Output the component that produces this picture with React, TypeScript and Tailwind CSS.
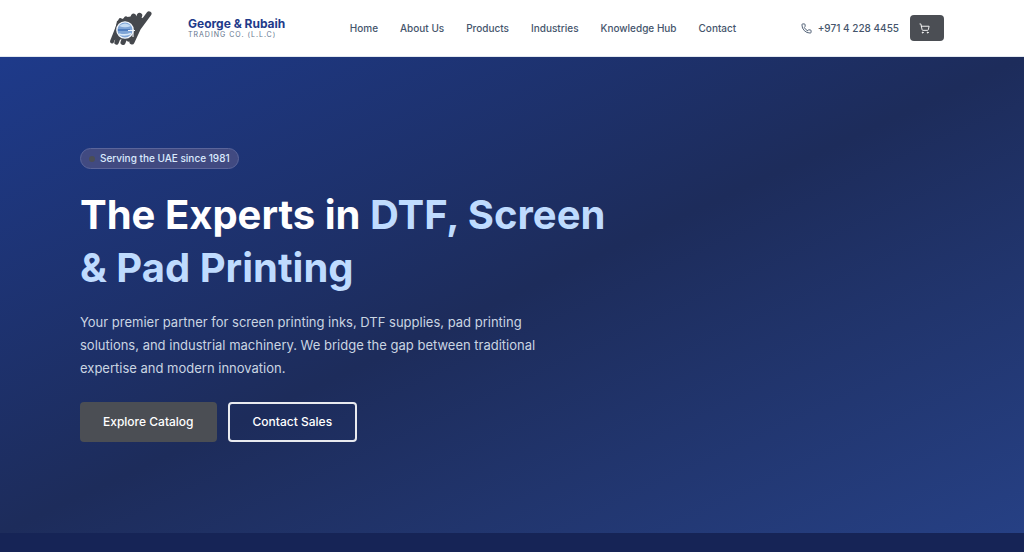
import { Phone, ShoppingCart } from 'lucide-react';

const navLinks = [
  { label: 'Home', href: '#home' },
  { label: 'About Us', href: '#about' },
  { label: 'Products', href: '#products' },
  { label: 'Industries', href: '#industries' },
  { label: 'Knowledge Hub', href: '#knowledge' },
  { label: 'Contact', href: '#contact' },
];

function Logo() {
  return (
    <svg viewBox="0 0 52 45" className="w-[52px] h-[45px]" aria-hidden="true">
      {/* brush strokes */}
      <g stroke="#45484d" fill="none" strokeLinecap="round">
        <path d="M7 35.500 L15.500 14" strokeWidth="4" />
        <path d="M11.500 36.500 L21 12.500" strokeWidth="4.500" />
        <path d="M18 36.500 L28.500 10" strokeWidth="5" />
        <path d="M24 33 L34.500 9.500" strokeWidth="5.500" />
        <path d="M27 36 L33.500 22 L44 7.800" strokeWidth="5" strokeLinejoin="round" />
      </g>
      <path d="M12 15 L22 11 L30 10 L38 12 L36 20 L31 29 L28 34 L22 33 L8 34 Z" fill="#45484d" />
      {/* globe */}
      <circle cx="20" cy="24" r="8.200" fill="#7fa5d6" stroke="#f3f7fc" strokeWidth="1.300" />
      <path d="M14 20 Q20 15 26 20 Q20 22.500 14 20 Z" fill="#c5dcf3" />
      <path d="M13 24 H25" stroke="#3d6eb5" strokeWidth="1.400" />
      <path d="M14 28 Q20 30 26 27.500" stroke="#d8e8f8" strokeWidth="1.600" fill="none" />
      <path d="M23 24.500 H30 M28 23.500 V31" stroke="#eef4fb" strokeWidth="1.200" fill="none" />
    </svg>
  );
}

function Header() {
  return (
    <header className="bg-white border-b border-slate-200">
      <div className="max-w-[910px] mx-auto px-[23px] h-14 flex items-center justify-between">
        <a href="#home" className="flex items-center">
          <span className="w-[108px] pl-[25px]">
            <Logo />
          </span>
          <span className="flex flex-col">
            <span className="text-[12px] leading-[14px] font-bold text-[#1e3a8a]">George &amp; Rubaih</span>
            <span className="text-[7px] leading-2 tracking-[1px] text-slate-500">TRADING CO. (L.L.C)</span>
          </span>
        </a>

        <nav className="flex items-center gap-[22px]">
          {navLinks.map((link) => (
            <a key={link.label} href={link.href} className="text-[10px] font-medium text-slate-600">
              {link.label}
            </a>
          ))}
        </nav>

        <div className="flex items-center gap-[11px]">
          <a href="tel:+97142284455" className="flex items-center gap-[6px] text-[10px] font-medium text-slate-600">
            <Phone size={11} />
            <span>+971 4 228 4455</span>
          </a>
          <button
            type="button"
            aria-label="Cart"
            className="h-[26px] w-[34px] pl-[9px] flex items-center rounded bg-[#4b4e54] text-white"
          >
            <ShoppingCart size={11} />
          </button>
        </div>
      </div>
    </header>
  );
}

function Hero() {
  return (
    <section className="bg-linear-to-br/srgb from-[#1e3a8a] via-[#1d2c5b] to-[#264084] py-[91px]">
      <div className="max-w-[910px] mx-auto px-[23px]">
        <div className="max-w-[546px]">
          <div className="flex w-fit items-center h-[21px] px-2 rounded-full bg-[#414a81] border border-[#5b659a] text-[10px] font-medium text-blue-100">
            <span className="size-[6px] mr-[5px] rounded-full bg-[#4b4e54]" />
            Serving the UAE since 1981
          </div>
          <h1 className="mt-[19px] text-[40px] leading-[53px] font-bold text-white">
            The Experts in <span className="text-[#bfdbfe]">DTF, Screen &amp; Pad Printing</span>
          </h1>
          <p className="mt-[17px] max-w-[478px] text-[13px] leading-[23px] text-slate-300">
            Your premier partner for screen printing inks, DTF supplies, pad printing solutions, and industrial
            machinery. We bridge the gap between traditional expertise and modern innovation.
          </p>
          <div className="mt-[22px] flex gap-[11px]">
            <a
              href="#products"
              className="h-10 px-[23px] flex items-center rounded bg-[#4b4e54] text-[12px] font-medium text-white"
            >
              Explore Catalog
            </a>
            <a
              href="#contact"
              className="h-10 px-[23px] flex items-center rounded border-2 border-white/90 text-[12px] font-medium text-white"
            >
              Contact Sales
            </a>
          </div>
        </div>
      </div>
    </section>
  );
}

export default function App() {
  return (
    <div className="min-h-screen bg-[#162456] font-['Inter',sans-serif]">
      <Header />
      <main>
        <Hero />
      </main>
    </div>
  );
}
